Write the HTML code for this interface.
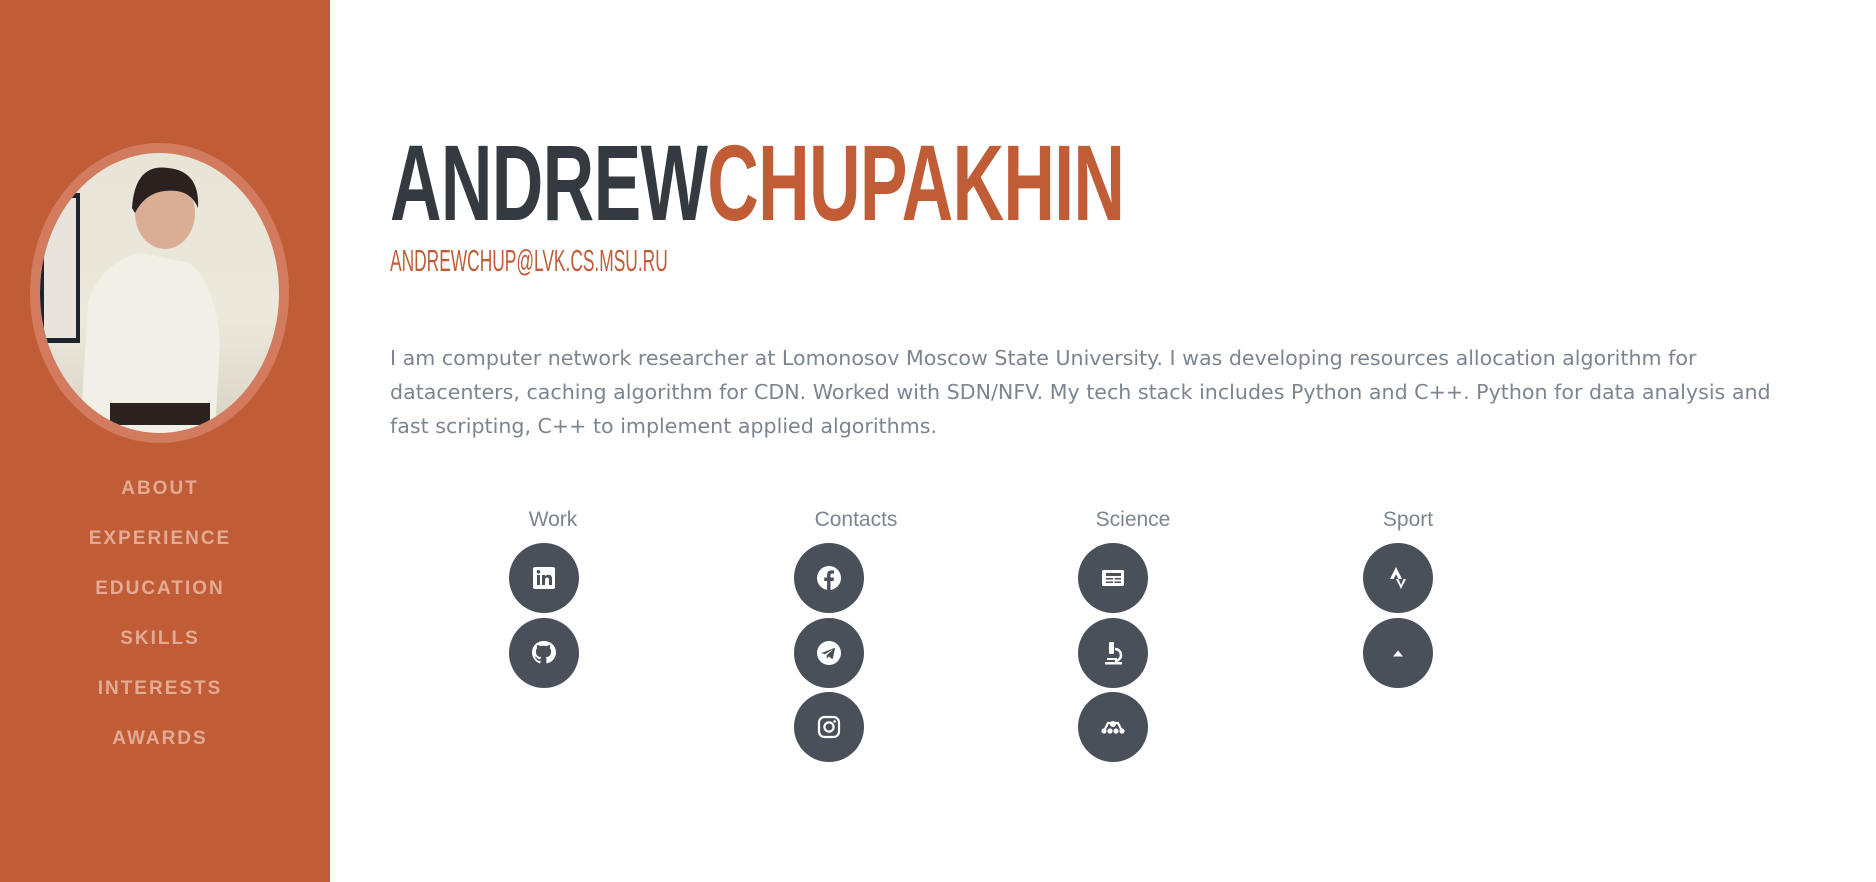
<!DOCTYPE html>
<html><head><meta charset="utf-8"><style>
*{margin:0;padding:0;box-sizing:border-box}
body{width:1876px;height:882px;overflow:hidden;background:#fff;font-family:"Liberation Sans",sans-serif;position:relative}
#side{position:absolute;left:0;top:0;width:330px;height:882px;background:#c05d37}
#photo{position:absolute;left:30px;top:143px;width:259px;height:300px;border-radius:50%;border:10px solid #d27b5e;background:linear-gradient(180deg,#e9e4d8 0%,#ece8dc 60%,#d8d2c4 100%);overflow:hidden}
#nav{position:absolute;left:0;width:320px;top:478px;text-align:center}
#nav div{height:50px;color:#e4aa93;font-weight:bold;font-size:19px;letter-spacing:2px}
.name{position:absolute;left:390px;top:129px;font-family:"Liberation Sans Narrow","Liberation Sans",sans-serif;font-weight:bold;font-size:108px;line-height:1;white-space:nowrap;transform-origin:left top;transform:scaleX(0.661);letter-spacing:-1px}
.email{position:absolute;left:390px;top:245px;font-family:"Liberation Sans Narrow","Liberation Sans",sans-serif;font-size:31px;line-height:1;color:#c05d37;white-space:nowrap;transform-origin:left top;transform:scaleX(0.56)}
p{position:absolute;left:390px;top:341px;font-family:"DejaVu Sans",sans-serif;font-size:20.6px;line-height:34px;color:#7c8590;white-space:nowrap}
.col{position:absolute;top:505px;width:160px;text-align:center}
.col h{display:block;font-size:21px;color:#7c8590;height:30px;line-height:30px}
.c{position:absolute;width:70px;height:70px;border-radius:50%;background:#495059}
.c svg{position:absolute;left:21px;top:21px;width:28px;height:28px}
</style></head><body>
<div id="side">
<div id="photo">
<svg width="239" height="280" viewBox="0 0 239 280">
<rect x="0" y="40" width="40" height="150" fill="#1d2430"/><rect x="4" y="45" width="32" height="140" fill="#e8e4dc"/>
<path d="M40 280 L48 150 Q60 110 100 100 L150 110 Q175 130 180 190 L175 280Z" fill="#f1efe6"/>
<rect x="70" y="250" width="100" height="22" fill="#2a2320"/>
<ellipse cx="125" cy="60" rx="30" ry="36" fill="#d9ae95"/>
<path d="M92 55 Q95 10 128 15 Q160 18 158 55 Q150 35 125 38 Q105 40 95 60Z" fill="#2b2220"/>
</svg>
</div>
<div id="nav"><div>ABOUT</div><div>EXPERIENCE</div><div>EDUCATION</div><div>SKILLS</div><div>INTERESTS</div><div>AWARDS</div></div>
</div>
<div class="name"><span style="color:#343a40">ANDREW</span><span style="color:#c05d37">CHUPAKHIN</span></div>
<div class="email">ANDREWCHUP@LVK.CS.MSU.RU</div>
<p>I am computer network researcher at Lomonosov Moscow State University. I was developing resources allocation algorithm for<br>datacenters, caching algorithm for CDN. Worked with SDN/NFV. My tech stack includes Python and C++. Python for data analysis and<br>fast scripting, C++ to implement applied algorithms.</p>

<div class="col" style="left:473px"><h>Work</h></div>
<div class="col" style="left:776px"><h>Contacts</h></div>
<div class="col" style="left:1053px"><h>Science</h></div>
<div class="col" style="left:1328px"><h>Sport</h></div>

<div class="c" style="left:509px;top:543px"><svg viewBox="0 0 28 28"><rect x="3" y="3" width="22" height="22" rx="2" fill="#fff"/><rect x="7" y="11" width="3" height="10" fill="#495059"/><circle cx="8.5" cy="7.8" r="1.8" fill="#495059"/><path d="M12 11h3v1.5q1-1.8 3.5-1.8 3.5 0 3.5 4V21h-3v-5.5q0-2-1.7-2-2.3 0-2.3 2.3V21h-3z" fill="#495059"/></svg></div>
<div class="c" style="left:509px;top:618px"><svg viewBox="0 0 28 28"><path d="M14 2C7 2 2 7 2 13.5c0 5 3.2 9.3 7.7 10.9.6.1.8-.3.8-.6v-2.1c-3.3.7-4-1.5-4-1.5-.5-1.4-1.3-1.8-1.3-1.8-1.1-.7.1-.7.1-.7 1.2.1 1.8 1.2 1.8 1.2 1.1 1.8 2.8 1.3 3.5 1 .1-.8.4-1.3.8-1.6-2.7-.3-5.5-1.3-5.5-5.9 0-1.3.5-2.4 1.2-3.2-.1-.3-.5-1.5.1-3.2 0 0 1-.3 3.3 1.2a11 11 0 0 1 6 0c2.3-1.5 3.3-1.2 3.3-1.2.7 1.7.2 2.9.1 3.2.8.8 1.2 1.9 1.2 3.2 0 4.6-2.8 5.6-5.5 5.9.4.4.8 1.1.8 2.2v3.3c0 .3.2.7.8.6C22.8 22.8 26 18.5 26 13.5 26 7 21 2 14 2z" fill="#fff"/></svg></div>
<div class="c" style="left:794px;top:543px"><svg viewBox="0 0 28 28"><circle cx="14" cy="14" r="12" fill="#fff"/><path d="M15.5 26V17h3l.5-3.5h-3.5v-2.2c0-1 .3-1.7 1.8-1.7H19V6.5c-.3 0-1.4-.1-2.6-.1-2.6 0-4.3 1.6-4.3 4.5v2.6H9.2V17h2.9v9z" fill="#495059"/></svg></div>
<div class="c" style="left:794px;top:618px"><svg viewBox="0 0 28 28"><circle cx="14" cy="14" r="12" fill="#fff"/><path d="M7.5 13.6l11.5-4.5c.6-.2 1 .1.9.9l-2 9.3c-.1.6-.6.8-1.1.5l-3-2.3-1.5 1.4c-.2.2-.4.3-.7.3l.2-3.1 5.6-5.1c.3-.2-.1-.4-.4-.2l-7 4.4-3-.9c-.7-.2-.7-.6.1-.9z" fill="#495059"/></svg></div>
<div class="c" style="left:794px;top:692px"><svg viewBox="0 0 28 28"><rect x="4" y="4" width="20" height="20" rx="5.5" fill="none" stroke="#fff" stroke-width="2.2"/><circle cx="14" cy="14" r="4.6" fill="none" stroke="#fff" stroke-width="2.2"/><circle cx="19.6" cy="8.4" r="1.3" fill="#fff"/></svg></div>
<div class="c" style="left:1078px;top:543px"><svg viewBox="0 0 28 28"><rect x="3" y="6" width="22" height="16" rx="1.5" fill="#fff"/><rect x="7" y="9" width="15" height="3" fill="#495059"/><rect x="7" y="14" width="7" height="1.5" fill="#495059"/><rect x="15.5" y="14" width="6.5" height="1.5" fill="#495059"/><rect x="7" y="17.5" width="7" height="1.5" fill="#495059"/><rect x="15.5" y="17.5" width="6.5" height="1.5" fill="#495059"/></svg></div>
<div class="c" style="left:1078px;top:618px"><svg viewBox="0 0 28 28"><rect x="10" y="3" width="5" height="12" rx="1" fill="#fff"/><path d="M16 10a6 6 0 0 1 0 12" fill="none" stroke="#fff" stroke-width="2.5"/><rect x="8" y="19" width="10" height="2" fill="#fff"/><rect x="6" y="23" width="17" height="2.5" fill="#fff"/></svg></div>
<div class="c" style="left:1078px;top:692px"><svg viewBox="0 0 28 28"><circle cx="5" cy="18" r="2.6" fill="#fff"/><circle cx="11" cy="18" r="2.6" fill="#fff"/><circle cx="17" cy="18" r="2.6" fill="#fff"/><circle cx="23" cy="18" r="2.6" fill="#fff"/><circle cx="14" cy="11" r="3" fill="#fff"/><path d="M5 18L9 10h10l4 8" fill="none" stroke="#fff" stroke-width="2.2"/></svg></div>
<div class="c" style="left:1363px;top:543px"><svg viewBox="0 0 28 28"><path d="M12 3L6 15h3.6L12 10.3 14.4 15H18z" fill="#fff"/><path d="M14.4 15L17 21 19.6 15H22L17 25 12 15z" fill="#fff"/></svg></div>
<div class="c" style="left:1363px;top:618px"><svg viewBox="0 0 28 28"><path d="M9 17.5L14 11.5 19 17.5z" fill="#fff"/></svg></div>
</body></html>
